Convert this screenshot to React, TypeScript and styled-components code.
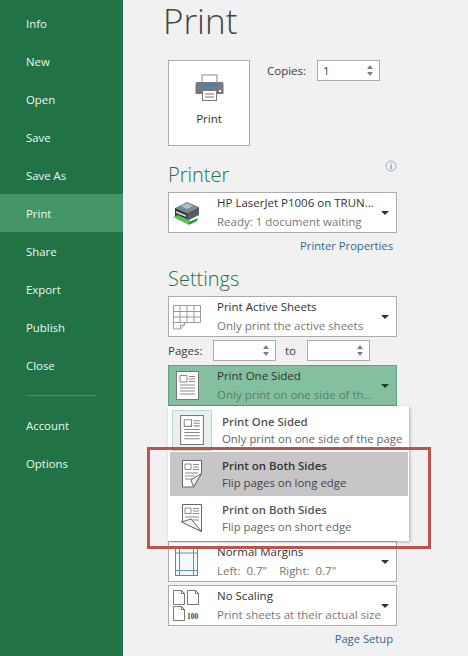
import React from "react";
import styled, { createGlobalStyle } from "styled-components";

const Global = createGlobalStyle`
  html, body { margin: 0; padding: 0; background: #f1f1f1; }
  * { box-sizing: border-box; }
  #root { width: 468px; height: 656px; overflow: hidden; }
`;
const FONT = `"Open Sans", "Noto Sans", "Liberation Sans", sans-serif`;

const Shell = styled.div`
  position: relative; display: flex; width: 468px; height: 656px; overflow: hidden;
  background: #f1f1f1; font-family: ${FONT}; font-size: 11.5px; color: #3c3c3c;
`;
const Sidebar = styled.nav`
  width: 123px; flex: none; background: #217346; padding-top: 4px; display: flex; flex-direction: column;
`;
const NavItem = styled.div<{ $active?: boolean }>`
  height: 38px; padding-left: 26px; display: flex; align-items: center; font-size: 11.4px;
  color: #eef6f1; background: ${p => (p.$active ? "#439467" : "transparent")};
`;
const NavRule = styled.div`
  height: 1px; background: #4a8d68; margin: 11px 26px 10px 26px;
`;
const Main = styled.main`
  flex: 1; padding-left: 45px; display: flex; flex-direction: column; align-items: flex-start; width: 229px;
`;
const Title = styled.h1`
  margin: 0 0 0 -5px; height: 60px; font-size: 35px; line-height: 42px; padding-top: 0; font-weight: 300; color: #444;
`;
const TopRow = styled.div`
  display: flex; align-items: flex-start; gap: 17px;
`;
const PrintButton = styled.div`
  width: 82px; height: 86px; background: #fff; border: 1px solid #ababab; display: flex; flex-direction: column;
  align-items: center; padding-top: 13px; gap: 10px; font-size: 11.5px; color: #333;
`;
const Copies = styled.div`
  display: flex; align-items: center; height: 21px; gap: 11px;
`;
const Spin = styled.div`
  width: 63px; height: 21px; background: #fff; border: 1px solid #ababab; display: flex; align-items: center;
  justify-content: space-between; padding: 0 5px 0 5px; font-size: 11.5px; color: #444;
`;
const Arrows = styled.div`
  display: flex; flex-direction: column; gap: 3px; margin-left: auto; margin-right: 1px;
`;
const ArrowUp = styled.div`
  width: 0; height: 0; border-left: 3.5px solid transparent; border-right: 3.5px solid transparent; border-bottom: 4px solid #808080;
`;
const ArrowDown = styled.div`
  width: 0; height: 0; border-left: 3.5px solid transparent; border-right: 3.5px solid transparent; border-top: 4px solid #808080;
`;
const HeadingRow = styled.div<{ $top: number }>`
  display: flex; justify-content: space-between; align-items: flex-start; width: 229px; height: 26px; margin: ${p => p.$top}px 0 4px;
`;
const Heading = styled.h2`
  margin: 0; font-size: 20px; line-height: 26px; font-weight: 300; color: #217346;
`;
const InfoMark = styled.svg`
  width: 12px; height: 12px; margin: -2px 0 0 0;
`;
const Drop = styled.div<{ $sel?: boolean }>`
  position: relative; width: 229px; height: 41px; flex: none; display: flex; align-items: center;
  background: ${p => (p.$sel ? "#84bf9f" : "#fff")}; border: 1px solid ${p => (p.$sel ? "#5f9f7d" : "#ababab")};
`;
const Slot = styled.div`
  width: 36px; margin-right: 12px; flex: none; display: flex; justify-content: center; align-items: center;
`;
const Lines = styled.div`
  flex: 1; min-width: 0; display: flex; flex-direction: column; gap: 3px; white-space: nowrap; line-height: 16px; font-size: 11.5px;
`;
const Line1 = styled.div`
  color: #333;
`;
const Line2 = styled.div<{ $sel?: boolean }>`
  white-space: pre; color: ${p => (p.$sel ? "#55806a" : "#777")};
`;
const Caret = styled.div<{ $sel?: boolean }>`
  width: 0; height: 0; flex: none; margin: 0 7px 0 4px; border-left: 4px solid transparent; border-right: 4px solid transparent;
  border-top: 4px solid ${p => (p.$sel ? "#1f3b2c" : "#333")};
`;
const LinkRow = styled.div`
  width: 225px; height: 24px; display: flex; align-items: center; justify-content: flex-end; color: #35668c; font-size: 11.2px;
`;
const PagesRow = styled.div`
  display: flex; align-items: center; margin: 3px 0 4px; height: 21px;
`;
const PagesLabel = styled.span`
  width: 45px;
`;
const ToLabel = styled.span`
  width: 31px; padding-left: 9px;
`;
const Menu = styled.div`
  position: relative; z-index: 2; width: 241px; height: 135px; flex: none; background: #fff; padding: 2px 1px 0 2px;
  box-shadow: 1px 1px 3px rgba(0, 0, 0, .28);
`;
const MenuItem = styled.div<{ $hover?: boolean }>`
  height: 44px; display: flex; align-items: center; background: ${p => (p.$hover ? "#c6c6c6" : "transparent")};
`;
const MenuSlot = styled.div<{ $current?: boolean }>`
  width: 40px; height: 41px; margin: 0 10px 0 2px; flex: none; display: flex; align-items: center; justify-content: center;
  background: ${p => (p.$current ? "#e6f2eb" : "transparent")}; border: 1px solid ${p => (p.$current ? "#b9d8c6" : "transparent")};
`;
const MenuText = styled.div`
  display: flex; flex-direction: column; line-height: 16px; gap: 1px; white-space: nowrap; font-size: 11.4px;
`;
const MenuTitle = styled.div<{ $hover?: boolean }>`
  font-weight: 600; color: ${p => (p.$hover ? "#333" : "#555")};
`;
const MenuSub = styled.div<{ $hover?: boolean }>`
  color: ${p => (p.$hover ? "#444" : "#666")};
`;
const Stack = styled.div`
  display: flex; flex-direction: column; gap: 3px;
`;
const Annotation = styled.div`
  position: absolute; z-index: 3; left: 147px; top: 447px; width: 284px; height: 102px; border: 3px solid #c0524c; pointer-events: none;
`;

const Sheet: React.FC<React.PropsWithChildren<{ w: number; h: number; vb: string }>> = ({ w, h, vb, children }) => (
  <svg width={w} height={h} viewBox={vb} fill="none" stroke="#6f6f6f" strokeWidth="1">{children}</svg>
);

const PrinterBig = () => (
  <svg width="29" height="27" viewBox="0 0 29 27">
    <rect x="7" y="1" width="15" height="10" fill="#fff" stroke="#8a8a8a" />
    <path d="M2 8h25a1.5 1.5 0 0 1 1.5 1.5V20H.5V9.500A1.500 1.500 0 0 1 2 8Z" fill="#77797c" />
    <rect x="6" y="9" width="17" height="4" fill="#4f7ea8" />
    <rect x="24" y="16" width="2" height="2" fill="#fff" />
    <rect x="7.500" y="16.500" width="14" height="10" fill="#fff" stroke="#77797c" />
    <path d="M10 20h9M10 23h9" stroke="#77797c" />
  </svg>
);
const Printer3D = () => (
  <svg width="30" height="26" viewBox="0 0 30 26">
    <path d="M3 8 15 2l12 5-12 6Z" fill="#7c8a8e" />
    <path d="M9 6l6-2.500 6 2.500-6 3Z" fill="#a5c4cf" />
    <path d="M3 8l12 5v8L3 16Z" fill="#2f3436" />
    <path d="M15 13l12-6v8l-12 6Z" fill="#555b5e" />
    <path d="M4 11l10 4v2L4 13Z" fill="#c9cdcf" />
    <path d="M1 17l5-2 13 6-4 3Z" fill="#59c14c" />
    <path d="M15 24l4-3 7-3-1 3-8 4Z" fill="#2f9a33" />
    <path d="M0 18l2 1M16 25l2 1" stroke="#e6e6e6" strokeWidth="2" />
  </svg>
);
const GridIcon = () => (
  <Sheet w={29} h={26} vb="0 0 29 26">
    <path d="M.500 1.500h27v17h-27zM.500 7.500h27M.500 13h27M7 1.500v17M14 1.500v17M21 1.500v17" stroke="#9a9a9a" />
    <path d="M.500 18.500v6.500h7l4-4v-2.500M7.500 25v-4h4" stroke="#9a9a9a" />
  </Sheet>
);
const DocIcon = ({ w = 23, h = 29 }: { w?: number; h?: number }) => (
  <Sheet w={w} h={h} vb="0 0 23 29">
    <rect x=".5" y=".5" width="22" height="28" fill="#fff" stroke="#777" />
    <path d="M4 4.500h7v6.500H4zM13 5.500h6M13 8h6M13 10.500h6M4 14h15M4 17h15M4 20h15M4 23h15" stroke="#8a8a8a" />
  </Sheet>
);
const LongEdgeIcon = () => (
  <Sheet w={22} h={28} vb="0 0 22 28">
    <path d="M1.500 .5h19v13l-8 13.500h-11Z" fill="#fff" stroke="#666" />
    <path d="M4 4h6v5.500H4zM12 4.500h6M12 7h6M12 9.500h6M4 13h13M4 16h10M4 19h8" stroke="#8a8a8a" />
    <path d="M20.500 13.500 12.500 27 10 20Z" fill="#eee" stroke="#666" />
  </Sheet>
);
const ShortEdgeIcon = () => (
  <Sheet w={22} h={28} vb="0 0 22 28">
    <path d="M1.500 .5h19v27L1.500 18Z" fill="#fff" stroke="#666" />
    <path d="M4 4h6v5.500H4zM12 4.500h6M12 7h6M12 9.500h6M4 13h14M9 16h9" stroke="#8a8a8a" />
    <path d="M.5 18 10 15 20.500 27.500Z" fill="#f2f2f2" stroke="#666" />
  </Sheet>
);
const MarginsIcon = () => (
  <Sheet w={24} h={30} vb="0 0 24 30">
    <rect x=".5" y=".5" width="22" height="28" fill="#f4f9fc" stroke="#6d8190" />
    <path d="M4.500 .5v28M18.500 .5v28M.5 6h22M.5 23.500h22" stroke="#5f93ad" />
  </Sheet>
);
const ScaleIcon = () => (
  <svg width="29" height="31" viewBox="0 0 29 31" fill="none" stroke="#777">
    <path d="M.500 .5h8l3 3v11h-11zM8.500 .5v3h3M14.500 .5h8l3 3v11h-11zM22.500 .5v3h3M.5 16.500h8l3 3v11h-11zM8.500 16.500v3h3" fill="#fff" />
    <text x="14" y="29" fontSize="7.500" fontFamily='"Liberation Serif", serif' fontWeight="700" fill="#444" stroke="none">100</text>
  </svg>
);

const SpinBox = ({ value }: { value?: string }) => (
  <Spin>
    {value}
    <Arrows><ArrowUp /><ArrowDown /></Arrows>
  </Spin>
);

const Dropdown = ({ icon, a, b, sel }: { icon: React.ReactNode; a: string; b: string; sel?: boolean }) => (
  <Drop $sel={sel}>
    <Slot>{icon}</Slot>
    <Lines>
      <Line1>{a}</Line1>
      <Line2 $sel={sel}>{b}</Line2>
    </Lines>
    <Caret $sel={sel} />
  </Drop>
);

const nav = ["Info", "New", "Open", "Save", "Save As", "Print", "Share", "Export", "Publish", "Close"];

export default function App() {
  return (
    <Shell>
      <Global />
      <Sidebar>
        {nav.map(n => <NavItem key={n} $active={n === "Print"}>{n}</NavItem>)}
        <NavRule />
        <NavItem>Account</NavItem>
        <NavItem>Options</NavItem>
      </Sidebar>
      <Main>
        <Title>Print</Title>
        <TopRow>
          <PrintButton><PrinterBig />Print</PrintButton>
          <Copies>Copies:<SpinBox value="1" /></Copies>
        </TopRow>
        <HeadingRow $top={16}>
          <Heading>Printer</Heading>
          <InfoMark viewBox="0 0 12 12" fill="none">
            <circle cx="6" cy="6" r="5" stroke="#8fb4cc" />
            <path d="M6 5v4M6 3v1" stroke="#4a86ad" />
          </InfoMark>
        </HeadingRow>
        <Dropdown icon={<Printer3D />} a="HP LaserJet P1006 on TRUN..." b="Ready: 1 document waiting" />
        <LinkRow>Printer Properties</LinkRow>
        <HeadingRow $top={9}><Heading>Settings</Heading></HeadingRow>
        <Dropdown icon={<GridIcon />} a="Print Active Sheets" b="Only print the active sheets" />
        <PagesRow>
          <PagesLabel>Pages:</PagesLabel>
          <SpinBox />
          <ToLabel>to</ToLabel>
          <SpinBox />
        </PagesRow>
        <Dropdown sel icon={<DocIcon />} a="Print One Sided" b="Only print on one side of th..." />
        <Menu>
          <MenuItem>
            <MenuSlot $current><DocIcon w={24} h={30} /></MenuSlot>
            <MenuText><MenuTitle>Print One Sided</MenuTitle><MenuSub>Only print on one side of the page</MenuSub></MenuText>
          </MenuItem>
          <MenuItem $hover>
            <MenuSlot><LongEdgeIcon /></MenuSlot>
            <MenuText><MenuTitle $hover>Print on Both Sides</MenuTitle><MenuSub $hover>Flip pages on long edge</MenuSub></MenuText>
          </MenuItem>
          <MenuItem>
            <MenuSlot><ShortEdgeIcon /></MenuSlot>
            <MenuText><MenuTitle>Print on Both Sides</MenuTitle><MenuSub>Flip pages on short edge</MenuSub></MenuText>
          </MenuItem>
        </Menu>
        <Stack>
          <Dropdown icon={<MarginsIcon />} a="Normal Margins" b={'Left:  0.7"    Right:  0.7"'} />
          <Dropdown icon={<ScaleIcon />} a="No Scaling" b="Print sheets at their actual size" />
        </Stack>
        <LinkRow>Page Setup</LinkRow>
      </Main>
      <Annotation />
    </Shell>
  );
}
